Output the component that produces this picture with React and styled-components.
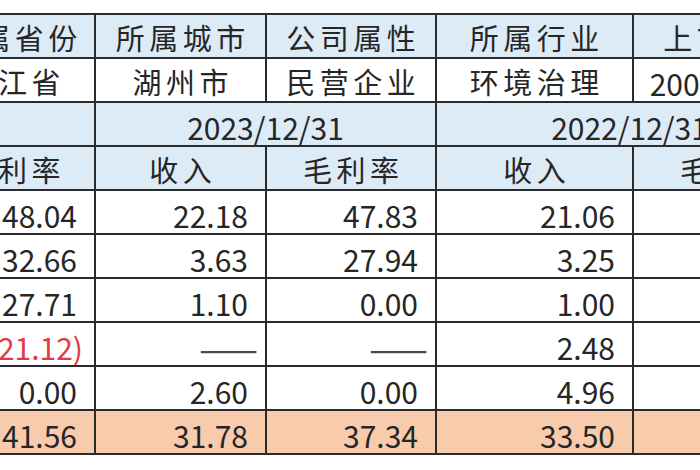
import styled, { createGlobalStyle } from "styled-components";

const GlobalStyle = createGlobalStyle`
  html, body {
    margin: 0;
    padding: 0;
    background: #ffffff;
    overflow: hidden;
  }
`;

const Page = styled.div`
  width: 700px;
  height: 470px;
  overflow: hidden;
  padding-top: 13px;
  box-sizing: border-box;
`;

const Sheet = styled.table`
  border-collapse: collapse;
  table-layout: fixed;
  width: 893px;
  margin-left: -71px;
  font-family: "Noto Sans CJK SC", "Noto Sans", sans-serif;
  color: #262626;
`;

const Col = styled.col`
  width: ${(p) => p.$w}px;
`;

const tones = {
  blue: "#ddebf7",
  total: "#f8cbad",
  plain: "#ffffff",
};

const Row = styled.tr`
  height: 44px;
  background: ${(p) => tones[p.$tone || "plain"]};
`;

const Cell = styled.td`
  border: 2px solid #2b2b2b;
  padding: 3px 0 0 0;
  white-space: nowrap;
  overflow: hidden;
  line-height: 1;
`;

// 文字标题：居中
const Label = styled(Cell)`
  text-align: center;
  font-size: 29px;
  letter-spacing: 4.5px;
  padding-left: 4.5px;
`;

// 数字：右对齐
const Num = styled(Cell)`
  text-align: right;
  font-size: 30px;
  padding-top: 5px;
  padding-right: ${(p) => (p.$neg ? "11px" : "17px")};
  color: ${(p) => (p.$neg ? "#e23a46" : "inherit")};
`;

const DateCell = styled(Cell)`
  text-align: center;
  font-size: 30px;
  padding-top: 5px;
`;

const Dash = styled.span`
  font-size: 35px;
  color: #4a4a4a;
  margin-right: -10px;
`;

const rows = [
  ["48.04", "22.18", "47.83", "21.06"],
  ["32.66", "3.63", "27.94", "3.25"],
  ["27.71", "1.10", "0.00", "1.00"],
  ["(21.12)", "-", "-", "2.48"],
  ["0.00", "2.60", "0.00", "4.96"],
];

const total = ["41.56", "31.78", "37.34", "33.50"];

const renderNum = (v, i) => {
  if (v === "-") {
    return (
      <Num key={i}>
        <Dash>——</Dash>
      </Num>
    );
  }
  return (
    <Num key={i} $neg={v.startsWith("(")}>
      {v}
    </Num>
  );
};

export default function App() {
  return (
    <>
      <GlobalStyle />
      <Page>
        <Sheet>
          <colgroup>
            <Col $w={165} />
            <Col $w={171} />
            <Col $w={170} />
            <Col $w={197} />
            <Col $w={190} />
          </colgroup>
          <tbody>
            <Row $tone="blue">
              <Label>所属省份</Label>
              <Label>所属城市</Label>
              <Label>公司属性</Label>
              <Label>所属行业</Label>
              <Label>上市时间</Label>
            </Row>
            <Row>
              <Label>浙江省</Label>
              <Label>湖州市</Label>
              <Label>民营企业</Label>
              <Label>环境治理</Label>
              <DateCell>2004/06/29</DateCell>
            </Row>
            <Row $tone="blue">
              <Cell />
              <DateCell colSpan={2}>2023/12/31</DateCell>
              <DateCell colSpan={2}>2022/12/31</DateCell>
            </Row>
            <Row $tone="blue">
              <Label>毛利率</Label>
              <Label>收入</Label>
              <Label>毛利率</Label>
              <Label>收入</Label>
              <Label>毛利率</Label>
            </Row>
            {rows.map((r, i) => (
              <Row key={i}>
                {r.map(renderNum)}
                <Cell />
              </Row>
            ))}
            <Row $tone="total">
              {total.map(renderNum)}
              <Cell />
            </Row>
          </tbody>
        </Sheet>
      </Page>
    </>
  );
}
